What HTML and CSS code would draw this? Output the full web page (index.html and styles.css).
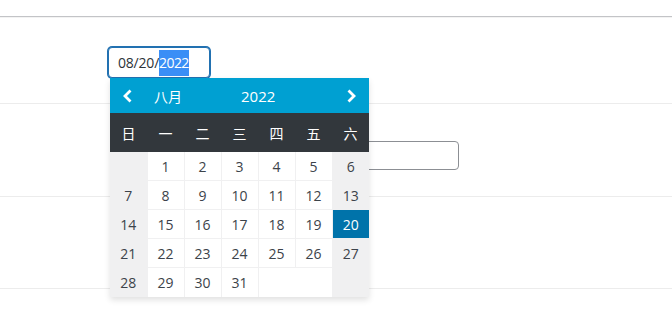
FILE: index.html
```html
<!DOCTYPE html>
<html lang="zh">
<head>
  <meta charset="UTF-8" />
  <title>日期选择</title>
  <link rel="stylesheet" href="styles.css">
</head>
<body>
  <div class="page">
    <div class="row row-first">
      <div class="field">
        <div class="date-input focused">08/20/<span class="sel">2022</span></div>
        <div class="datepicker">
          <div class="dp-head">
            <span class="dp-prev">
              <svg width="12" height="14" viewBox="0 0 12 14"><path d="M8.5 1.5 L3 7 L8.5 12.5" fill="none" stroke="#fff" stroke-width="2.8"/></svg>
            </span>
            <span class="dp-month">八月</span>
            <span class="dp-year">2022</span>
            <span class="dp-next">
              <svg width="12" height="14" viewBox="0 0 12 14"><path d="M3.5 1.5 L9 7 L3.5 12.5" fill="none" stroke="#fff" stroke-width="2.8"/></svg>
            </span>
          </div>
          <table class="dp-table">
            <thead>
              <tr><th>日</th><th>一</th><th>二</th><th>三</th><th>四</th><th>五</th><th>六</th></tr>
            </thead>
            <tbody>
              <tr><td class="we"></td><td>1</td><td>2</td><td>3</td><td>4</td><td>5</td><td class="we">6</td></tr>
              <tr><td class="we">7</td><td>8</td><td>9</td><td>10</td><td>11</td><td>12</td><td class="we">13</td></tr>
              <tr><td class="we">14</td><td>15</td><td>16</td><td>17</td><td>18</td><td>19</td><td class="we active">20</td></tr>
              <tr><td class="we">21</td><td>22</td><td>23</td><td>24</td><td>25</td><td>26</td><td class="we">27</td></tr>
              <tr class="last"><td class="we">28</td><td>29</td><td>30</td><td>31</td><td class="empty" colspan="2"></td><td class="we"></td></tr>
            </tbody>
          </table>
        </div>
      </div>
    </div>
    <div class="row row-second">
      <div class="text-input"></div>
    </div>
    <div class="row row-third"></div>
    <div class="row-last"></div>
  </div>
</body>
</html>
```

FILE: styles.css
```css
body {
  margin: 0;
  background: #fff;
  font-family: "Open Sans", "Noto Sans CJK SC", sans-serif;
  color: #3c434a;
}

.page {
  padding-top: 16px;
}

.row {
  border-bottom: 1px solid #ececec;
  padding-left: 108px;
}

.row-first {
  border-top: 1px solid #c3c4c7;
  height: 56px;
  padding-top: 30px;
  box-shadow: inset 0 1px 0 #f3f3f3;
}

.row-second {
  height: 55px;
  padding-top: 37px;
  padding-left: 120px;
}

.row-third {
  height: 91px;
}

.row-last {
  height: 36px;
}

.field {
  position: relative;
  width: 102px;
}

.date-input {
  box-sizing: border-box;
  width: 102px;
  height: 31px;
  border: 1px solid #2271b1;
  box-shadow: 0 0 0 1px #2271b1;
  border-radius: 4px;
  padding: 3px 0 0 9px;
  font-size: 14px;
  line-height: 23px;
  color: #2c3338;
  background: #fff;
  letter-spacing: -0.2px;
}

.sel {
  display: inline-block;
  background: #3a8ef6;
  color: #fff;
  height: 26px;
  line-height: 26px;
  vertical-align: top;
  margin-top: -1px;
  letter-spacing: -0.6px;
}

.text-input {
  box-sizing: border-box;
  width: 339px;
  height: 29px;
  border: 1px solid #8c8f94;
  border-radius: 4px;
}

.datepicker {
  position: absolute;
  top: 31px;
  left: 2px;
  width: 259px;
  background: #fff;
  box-shadow: 0 3px 6px rgba(0, 0, 0, 0.12);
  z-index: 2;
}

.dp-head {
  display: flex;
  align-items: center;
  height: 35px;
  background: #00a0d2;
  color: #fff;
  font-size: 15px;
}

.dp-prev,
.dp-next {
  display: flex;
  width: 12px;
  height: 14px;
}

.dp-prev {
  margin-left: 12px;
}

.dp-month {
  margin-left: 20px;
  font-family: "Noto Sans CJK SC", sans-serif;
  font-size: 14px;
}

.dp-year {
  margin-left: 59px;
}

.dp-next {
  margin-left: auto;
  margin-right: 12px;
}

.dp-table {
  border-collapse: collapse;
  table-layout: fixed;
  width: 259px;
}

.dp-table th {
  width: 37px;
  height: 39px;
  padding: 0;
  background: #32373c;
  color: #fff;
  font-family: "Noto Sans CJK SC", sans-serif;
  font-weight: normal;
  font-size: 14px;
  text-align: center;
}

.dp-table td {
  height: 28px;
  padding: 0;
  border: 1px solid #f0f0f1;
  border-top: 0;
  text-align: center;
  font-size: 14px;
  color: #3c434a;
}

.dp-table tr td:first-child {
  border-left: 0;
}

.dp-table tr td:last-child {
  border-right: 0;
}

.dp-table tr.last td {
  border-bottom: 0;
  height: 29px;
}

.dp-table td.we {
  background: #f0f0f1;
}

.dp-table td.active {
  background: #0073aa;
  color: #fff;
}
```
